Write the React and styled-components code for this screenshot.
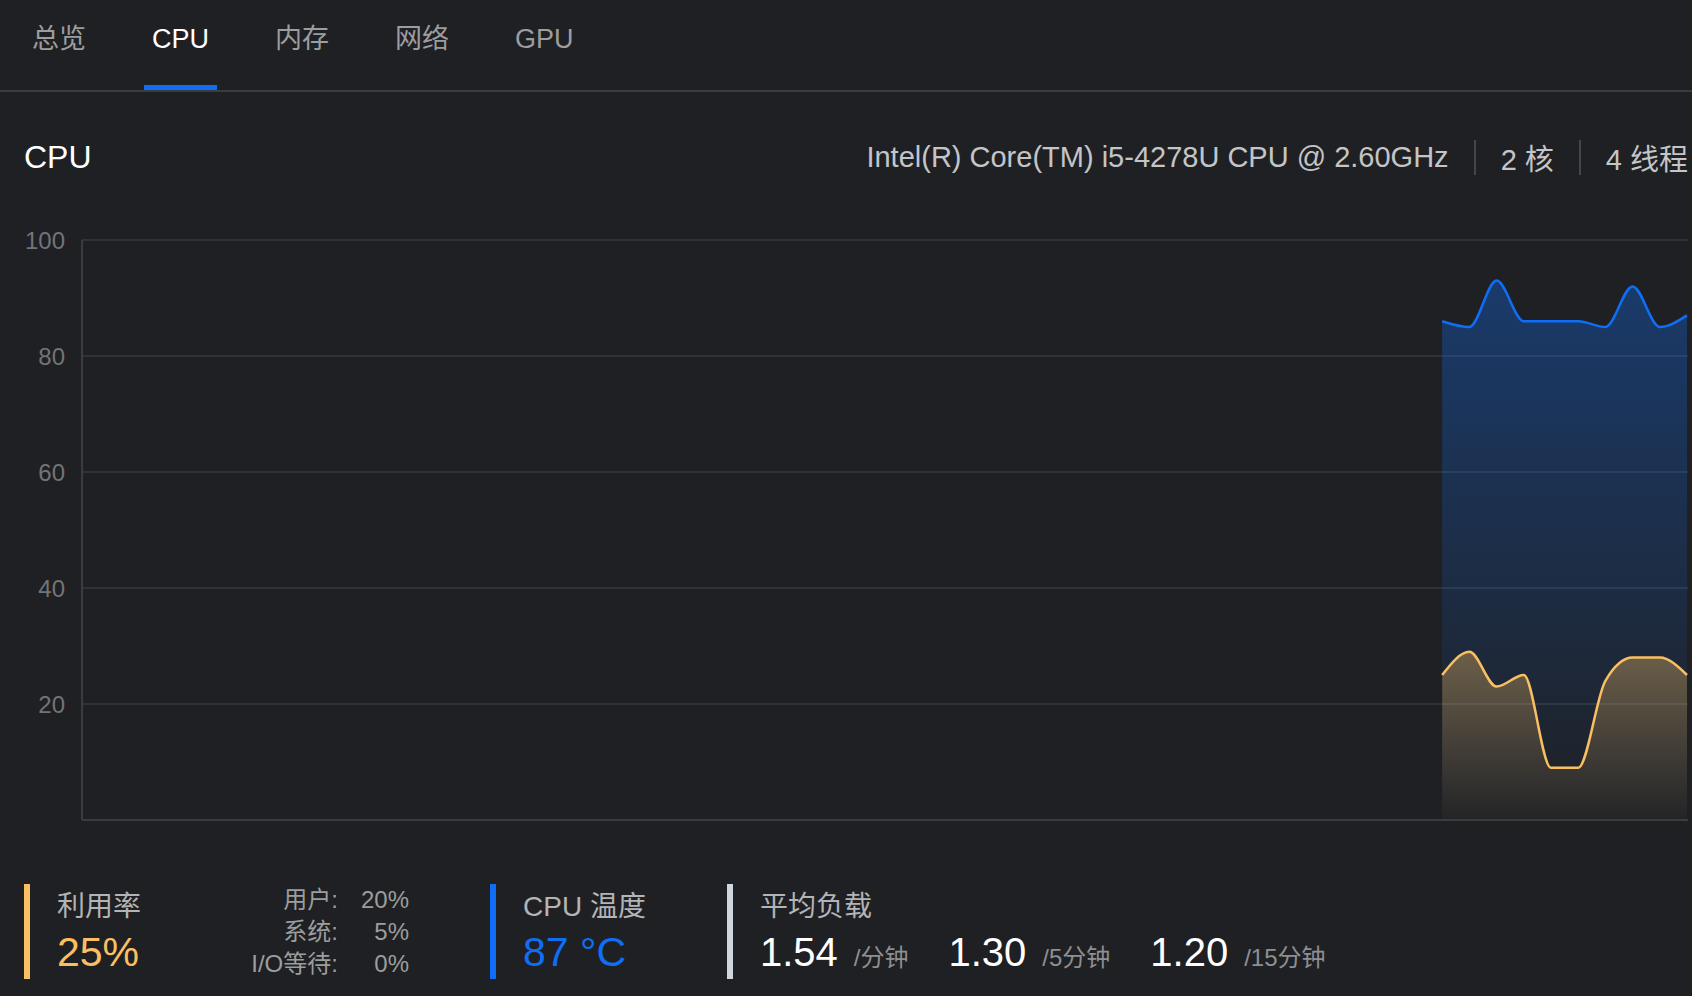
import React from "react";
import styled, { createGlobalStyle } from "styled-components";

const GlobalStyle = createGlobalStyle`
  html, body { margin: 0; padding: 0; background: #1f2023; }
  body { font-family: "Liberation Sans", "Noto Sans CJK SC", sans-serif; }
  * { box-sizing: border-box; }
`;

const Page = styled.div`
  width: 1692px;
  height: 996px;
  overflow: hidden;
  background: #1f2023;
  display: flex;
  flex-direction: column;
`;

const TabBar = styled.nav`
  height: 92px;
  flex-shrink: 0;
  border-bottom: 2px solid #3b3c3f;
  display: flex;
  gap: 50px;
  padding-left: 24px;
`;

const Tab = styled.div`
  position: relative;
  padding: 21px 8px 0;
  font-size: 27px;
  line-height: 36px;
  color: ${(p) => (p.$active ? "#ffffff" : "#9c9d9f")};
  white-space: nowrap;
`;

const Underline = styled.span`
  position: absolute;
  left: 0;
  right: 0;
  bottom: 0;
  height: 5px;
  background: #0f6ef5;
`;

const Header = styled.header`
  margin-top: 35px;
  height: 60px;
  flex-shrink: 0;
  display: flex;
  align-items: center;
  justify-content: space-between;
  padding: 0 4px 0 24px;
`;

const Title = styled.h1`
  margin: 0;
  font-size: 32px;
  font-weight: 500;
  color: #ffffff;
`;

const Info = styled.div`
  display: flex;
  align-items: center;
  font-size: 29px;
  color: #c4c5c7;
  white-space: nowrap;
`;

const Sep = styled.span`
  width: 2px;
  height: 35px;
  margin: 0 25px;
  background: #45464a;
`;

const ChartWrap = styled.div`
  margin-top: 38px;
  height: 610px;
  flex-shrink: 0;
`;

const Stats = styled.section`
  margin-top: 49px;
  display: flex;
  gap: 81px;
  padding-left: 24px;
`;

const Block = styled.div`
  height: 95px;
  border-left: 6px solid ${(p) => p.$color};
  padding-left: 27px;
  display: flex;
`;

const UsageBlock = styled(Block)`
  width: 385px;
`;

const Col = styled.div`
  display: flex;
  flex-direction: column;
  padding-top: 5px;
`;

const Label = styled.div`
  font-size: 28px;
  line-height: 36px;
  color: #b3b4b6;
  white-space: nowrap;
`;

const BigValue = styled.div`
  margin-top: 5px;
  font-size: 41px;
  line-height: 44px;
  color: ${(p) => p.$color};
  white-space: nowrap;
`;

const SubGrid = styled.div`
  margin-left: auto;
  display: grid;
  grid-template-columns: auto auto;
  column-gap: 23px;
  justify-items: end;
  font-size: 24px;
  line-height: 32px;
  color: #9c9d9f;
`;

const LoadRow = styled.div`
  margin-top: 5px;
  display: flex;
  align-items: baseline;
  gap: 40px;
`;

const LoadItem = styled.div`
  display: flex;
  align-items: baseline;
  gap: 16px;
  white-space: nowrap;
`;

const LoadNum = styled.span`
  font-size: 40px;
  line-height: 44px;
  color: #ffffff;
`;

const LoadUnit = styled.span`
  font-size: 24px;
  color: #8e8f92;
`;

// ---- chart helpers (monotone cubic, like d3 curveMonotoneX)
function sign(v) {
  return v < 0 ? -1 : 1;
}
function monotonePath(pts) {
  const n = pts.length;
  const t = new Array(n).fill(0);
  for (let i = 1; i < n - 1; i++) {
    const [x0, y0] = pts[i - 1];
    const [x1, y1] = pts[i];
    const [x2, y2] = pts[i + 1];
    const h0 = x1 - x0;
    const h1 = x2 - x1;
    const s0 = (y1 - y0) / h0;
    const s1 = (y2 - y1) / h1;
    const p = (s0 * h1 + s1 * h0) / (h0 + h1);
    t[i] = (sign(s0) + sign(s1)) * Math.min(Math.abs(s0), Math.abs(s1), 0.5 * Math.abs(p)) || 0;
  }
  {
    const h = pts[1][0] - pts[0][0];
    t[0] = (3 * (pts[1][1] - pts[0][1]) / h - t[1]) / 2;
    const hl = pts[n - 1][0] - pts[n - 2][0];
    t[n - 1] = (3 * (pts[n - 1][1] - pts[n - 2][1]) / hl - t[n - 2]) / 2;
  }
  let d = `M${pts[0][0]},${pts[0][1]}`;
  for (let i = 0; i < n - 1; i++) {
    const [x0, y0] = pts[i];
    const [x1, y1] = pts[i + 1];
    const dx = (x1 - x0) / 3;
    d += ` C${x0 + dx},${y0 + dx * t[i]} ${x1 - dx},${y1 - dx * t[i + 1]} ${x1},${y1}`;
  }
  return d;
}

const PLOT_L = 82;
const PLOT_R = 1688;
const PLOT_T = 15;
const PLOT_B = 595;
const N = 60;
const xAt = (i) => PLOT_L + (i * (PLOT_R - PLOT_L - 1)) / (N - 1);
const yAt = (v) => PLOT_B - (v * (PLOT_B - PLOT_T)) / 100;

const tempData = [86, 85, 93, 86, 86, 86, 85, 92, 85, 87];
const usageData = [25, 29, 23, 25, 9, 9, 24, 28, 28, 25];

function series(data) {
  const start = N - data.length;
  const pts = data.map((v, k) => [xAt(start + k), yAt(v)]);
  const line = monotonePath(pts);
  const area = `${line} L${pts[pts.length - 1][0]},${PLOT_B} L${pts[0][0]},${PLOT_B} Z`;
  return { line, area };
}

function Chart() {
  const temp = series(tempData);
  const usage = series(usageData);
  const ticks = [100, 80, 60, 40, 20];
  return (
    <svg width="1692" height="610" viewBox="0 0 1692 610">
      <defs>
        <linearGradient id="gBlue" x1="0" y1="0" x2="0" y2="1">
          <stop offset="0" stopColor="#0f6ef5" stopOpacity="0.34" />
          <stop offset="1" stopColor="#0f6ef5" stopOpacity="0.01" />
        </linearGradient>
        <linearGradient id="gYellow" x1="0" y1="0" x2="0" y2="1">
          <stop offset="0" stopColor="#f9bf62" stopOpacity="0.36" />
          <stop offset="1" stopColor="#f9bf62" stopOpacity="0.02" />
        </linearGradient>
      </defs>
      {ticks.map((v) => (
        <g key={v}>
          <line x1={PLOT_L} x2={PLOT_R} y1={yAt(v)} y2={yAt(v)} stroke="#37383b" strokeWidth="1.5" />
          <text
            x="65"
            y={yAt(v)}
            textAnchor="end"
            dominantBaseline="central"
            fontSize="24"
            fontFamily="Liberation Sans, sans-serif"
            fill="#737477"
          >
            {v}
          </text>
        </g>
      ))}
      <path d={temp.area} fill="url(#gBlue)" />
      <path d={usage.area} fill="url(#gYellow)" />
      <path d={temp.line} fill="none" stroke="#0f6ef5" strokeWidth="2.5" />
      <path d={usage.line} fill="none" stroke="#f9bf62" strokeWidth="2.5" />
      <line x1={PLOT_L} x2={PLOT_L} y1={PLOT_T} y2={PLOT_B} stroke="#3b3c3f" strokeWidth="2" />
      <line x1={PLOT_L} x2={PLOT_R} y1={PLOT_B} y2={PLOT_B} stroke="#3b3c3f" strokeWidth="2" />
    </svg>
  );
}

const tabs = ["总览", "CPU", "内存", "网络", "GPU"];

export default function App() {
  return (
    <Page>
      <GlobalStyle />
      <TabBar>
        {tabs.map((t) => (
          <Tab key={t} $active={t === "CPU"}>
            {t}
            {t === "CPU" && <Underline />}
          </Tab>
        ))}
      </TabBar>
      <Header>
        <Title>CPU</Title>
        <Info>
          <span>Intel(R) Core(TM) i5-4278U CPU @ 2.60GHz</span>
          <Sep />
          <span>2 核</span>
          <Sep />
          <span>4 线程</span>
        </Info>
      </Header>
      <ChartWrap>
        <Chart />
      </ChartWrap>
      <Stats>
        <UsageBlock $color="#f9bf62">
          <Col>
            <Label>利用率</Label>
            <BigValue $color="#f9bf62">25%</BigValue>
          </Col>
          <SubGrid>
            <span>用户:</span>
            <span>20%</span>
            <span>系统:</span>
            <span>5%</span>
            <span>I/O等待:</span>
            <span>0%</span>
          </SubGrid>
        </UsageBlock>
        <Block $color="#0f6ef5">
          <Col>
            <Label>CPU 温度</Label>
            <BigValue $color="#0f6ef5">87 °C</BigValue>
          </Col>
        </Block>
        <Block $color="#cfd6e0">
          <Col>
            <Label>平均负载</Label>
            <LoadRow>
              <LoadItem>
                <LoadNum>1.54</LoadNum>
                <LoadUnit>/分钟</LoadUnit>
              </LoadItem>
              <LoadItem>
                <LoadNum>1.30</LoadNum>
                <LoadUnit>/5分钟</LoadUnit>
              </LoadItem>
              <LoadItem>
                <LoadNum>1.20</LoadNum>
                <LoadUnit>/15分钟</LoadUnit>
              </LoadItem>
            </LoadRow>
          </Col>
        </Block>
      </Stats>
    </Page>
  );
}
